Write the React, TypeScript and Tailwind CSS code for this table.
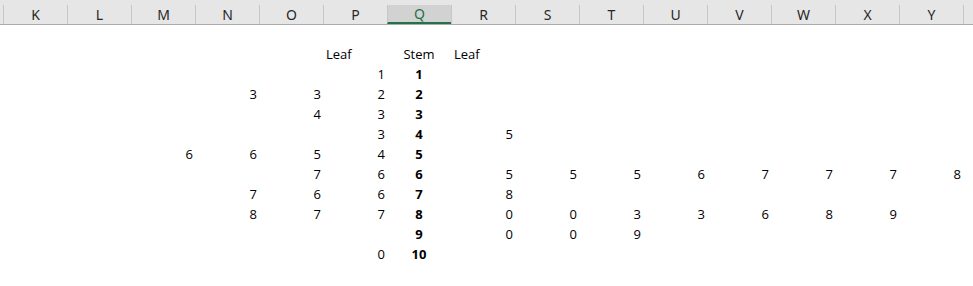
import React from "react";

const COLS = ["K", "L", "M", "N", "O", "P", "Q", "R", "S", "T", "U", "V", "W", "X", "Y"];

type Cell = { v: string; align?: "l" | "c" | "r"; bold?: boolean };

const rows: Record<string, Cell | string>[] = [
  {},
  { P: { v: "Leaf", align: "l" }, Q: { v: "Stem", align: "c" }, R: { v: "Leaf", align: "l" } },
  { P: "1", Q: { v: "1", align: "c", bold: true } },
  { N: "3", O: "3", P: "2", Q: { v: "2", align: "c", bold: true } },
  { O: "4", P: "3", Q: { v: "3", align: "c", bold: true } },
  { P: "3", Q: { v: "4", align: "c", bold: true }, R: "5" },
  { M: "6", N: "6", O: "5", P: "4", Q: { v: "5", align: "c", bold: true } },
  {
    O: "7", P: "6", Q: { v: "6", align: "c", bold: true },
    R: "5", S: "5", T: "5", U: "6", V: "7", W: "7", X: "7", Y: "8",
  },
  { N: "7", O: "6", P: "6", Q: { v: "7", align: "c", bold: true }, R: "8" },
  {
    N: "8", O: "7", P: "7", Q: { v: "8", align: "c", bold: true },
    R: "0", S: "0", T: "3", U: "3", V: "6", W: "8", X: "9",
  },
  { Q: { v: "9", align: "c", bold: true }, R: "0", S: "0", T: "9" },
  { P: "0", Q: { v: "10", align: "c", bold: true } },
  {},
];

function CellView({ c }: { c?: Cell | string }) {
  if (!c) return <div className="w-[64px] shrink-0 h-[20px]" />;
  const cell: Cell = typeof c === "string" ? { v: c, align: "r" } : c;
  const align = cell.align ?? "r";
  const cls =
    align === "l"
      ? "justify-start pl-[3px]"
      : align === "c"
      ? "justify-center"
      : "justify-end pr-[2px]";
  return (
    <div className={`w-[64px] shrink-0 h-[20px] flex items-center ${cls} ${cell.bold ? "font-bold" : ""}`}>
      {cell.v}
    </div>
  );
}

export default function App() {
  return (
    <div className="w-[973px] h-[286px] bg-white overflow-hidden font-['Open_Sans',sans-serif] text-[13px] text-black">
      <div className="h-[25px] bg-[#e6e6e6] border-b border-[#ababab] flex items-end font-['Noto_Sans',sans-serif] text-[14px] text-[#262626]">
        <div className="w-[3px] shrink-0" />
        {COLS.map((c) => (
          <div
            key={c}
            className={`w-[64px] shrink-0 h-[19px] border-l border-[#c6c6c6] flex items-center justify-center ${
              c === "Q" ? "bg-[#d2d2d2] text-[#217346] border-b-2 border-b-[#217346]" : ""
            }`}
          >
            {c}
          </div>
        ))}
        <div className="flex-1 h-[19px] border-l border-[#c6c6c6]" />
      </div>
      {rows.map((r, i) => (
        <div key={i} className="flex h-[20px]">
          <div className="w-[3px] shrink-0" />
          {COLS.map((c) => (
            <CellView key={c} c={r[c]} />
          ))}
        </div>
      ))}
    </div>
  );
}
